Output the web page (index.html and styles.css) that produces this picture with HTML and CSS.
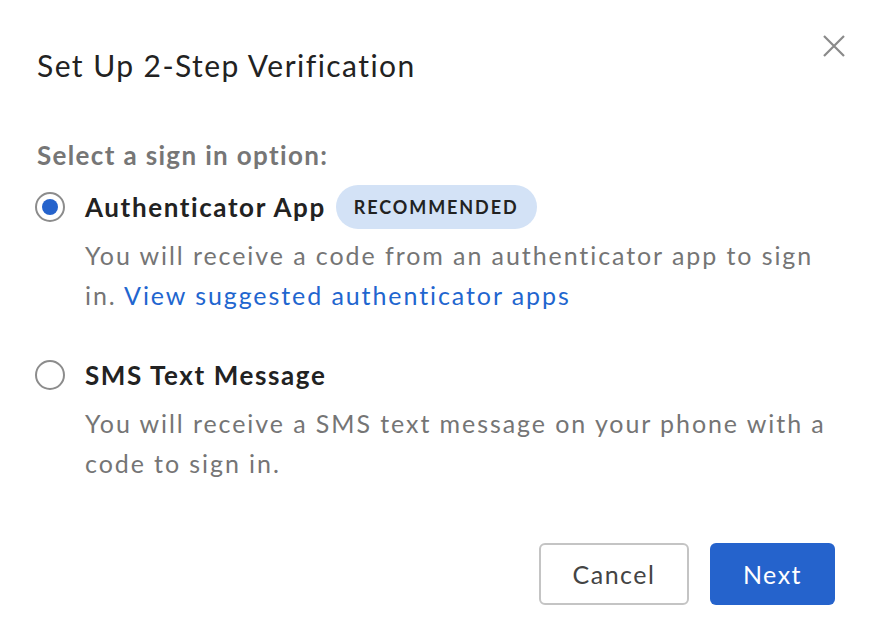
FILE: index.html
```html
<!DOCTYPE html>
<html>
<head>
<meta charset="utf-8">
<link rel="stylesheet" href="styles.css">
</head>
<body>
<div class="dialog">
  <button class="close" aria-label="Close">
    <svg width="22" height="22" viewBox="0 0 22 22"><path d="M1 1L21 21M21 1L1 21" stroke="#8a8a8a" stroke-width="2.2" fill="none"/></svg>
  </button>
  <h1 class="title">Set Up 2-Step Verification</h1>
  <div class="prompt">Select a sign in option:</div>
  <div class="option">
    <div class="option-row">
      <span class="radio checked"><span class="dot"></span></span>
      <span class="option-label">Authenticator App</span>
      <span class="badge">RECOMMENDED</span>
    </div>
    <p class="desc">You will receive a code from an authenticator app to sign in. <a class="link" href="#">View suggested authenticator apps</a></p>
  </div>
  <div class="option option-second">
    <div class="option-row">
      <span class="radio"></span>
      <span class="option-label">SMS Text Message</span>
    </div>
    <p class="desc">You will receive a SMS text message on your phone with a code to sign in.</p>
  </div>
  <div class="actions">
    <button class="btn btn-secondary">Cancel</button>
    <button class="btn btn-primary">Next</button>
  </div>
</div>
</body>
</html>
```
FILE: styles.css
```css
html, body {
  margin: 0;
  padding: 0;
  background: #ffffff;
}
body {
  font-family: Lato, "Open Sans", sans-serif;
  color: #222222;
}
.dialog {
  position: relative;
  width: 892px;
  height: 636px;
  box-sizing: border-box;
  padding: 45px 57px 0 37px;
}
.close {
  position: absolute;
  top: 35px;
  right: 47px;
  width: 22px;
  height: 22px;
  padding: 0;
  border: none;
  background: none;
  display: flex;
}
.title {
  margin: 0;
  font-size: 30px;
  line-height: 40px;
  font-weight: 400;
  letter-spacing: 1.45px;
  color: #222222;
}
.prompt {
  margin-top: 55px;
  font-size: 26px;
  line-height: 30px;
  font-weight: 700;
  letter-spacing: 1.35px;
  color: #767676;
}
.option {
  margin-top: 15px;
}
.option-second {
  margin-top: 38px;
}
.option-row {
  display: flex;
  align-items: center;
  height: 44px;
  margin-left: -2px;
}
.radio {
  width: 30px;
  height: 30px;
  box-sizing: border-box;
  border: 2px solid #8c8c8c;
  border-radius: 50%;
  display: flex;
  align-items: center;
  justify-content: center;
  margin-right: 20px;
  flex: none;
}
.dot {
  width: 16px;
  height: 16px;
  border-radius: 50%;
  background: #2563cc;
}
.option-label {
  font-size: 26px;
  font-weight: 700;
  letter-spacing: 1.6px;
  color: #222222;
}
.badge {
  margin-left: 10px;
  height: 44px;
  padding: 0 18px;
  display: flex;
  align-items: center;
  border-radius: 22px;
  background: #d3e2f6;
  font-size: 18px;
  font-weight: 700;
  letter-spacing: 1.9px;
  color: #222222;
}
.desc {
  margin: 6px 0 0 48px;
  font-size: 25px;
  line-height: 40px;
  color: #757575;
  letter-spacing: 1.92px;
}
.link {
  color: #1f66cf;
  text-decoration: none;
}
.actions {
  margin-top: 60px;
  display: flex;
  justify-content: flex-end;
  gap: 21px;
}
.btn {
  height: 62px;
  border-radius: 6px;
  font-family: Lato, "Open Sans", sans-serif;
  font-size: 25px;
  letter-spacing: 1.5px;
  box-sizing: border-box;
}
.btn-secondary {
  width: 150px;
  background: #ffffff;
  border: 2px solid #c4c4c4;
  color: #444444;
}
.btn-primary {
  width: 125px;
  background: #2563cc;
  border: none;
  color: #ffffff;
}
```
